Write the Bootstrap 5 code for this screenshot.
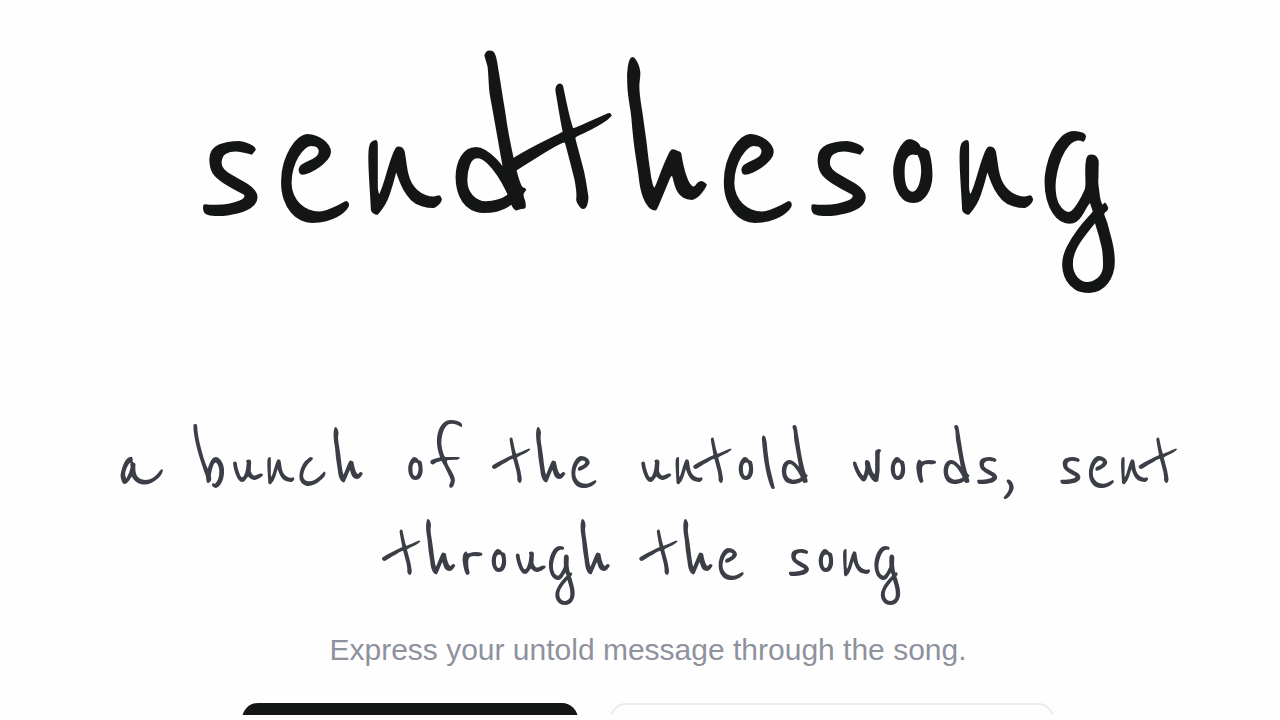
<!DOCTYPE html>
<html lang="en">
<head>
<meta charset="utf-8">
<meta name="viewport" content="width=device-width, initial-scale=1">
<title>sendthesong</title>
<link href="https://cdn.jsdelivr.net/npm/bootstrap@5.3.0/dist/css/bootstrap.min.css" rel="stylesheet">
<style>
  body { background: #fefefe; font-family: "Liberation Sans", Arial, sans-serif; padding-bottom: 5px; }
  .script { font-family: "Reenie Beanie", cursive; font-weight: 400; }
  .hero-title { font-size: 251px; line-height: 240px; color: #141515; padding-left: 30px; padding-top: 48px; margin-bottom: 133px; }
  .hero-lead { font-size: 92px; line-height: 92px; color: #3b3e46; padding: 0 80px 0 94px; margin-bottom: 27px; }
  .hero-note { font-size: 30px; line-height: 36px; color: #8d929c; padding-left: 16px; margin-bottom: 35px; }
  .hero-actions { gap: 32px; padding-left: 16px; }
  .cta { height: 96px; border-radius: 16px; }
  .cta-dark { width: 336px; background: #151616; }
  .cta-light { width: 444px; background: #fefefe; border: 2px solid #ebebec; }
</style>
</head>
<body class="vh-100">
<main class="h-100 overflow-hidden text-center">
  <h1 class="script hero-title">sendthesong</h1>
  <p class="script hero-lead">a bunch of the untold words, sent through the song</p>
  <p class="hero-note">Express your untold message through the song.</p>
  <div class="hero-actions d-flex justify-content-center">
    <button class="btn cta cta-dark" type="button"></button>
    <button class="btn cta cta-light" type="button"></button>
  </div>
</main>
<script src="https://cdn.jsdelivr.net/npm/bootstrap@5.3.0/dist/js/bootstrap.bundle.min.js"></script>
</body>
</html>
